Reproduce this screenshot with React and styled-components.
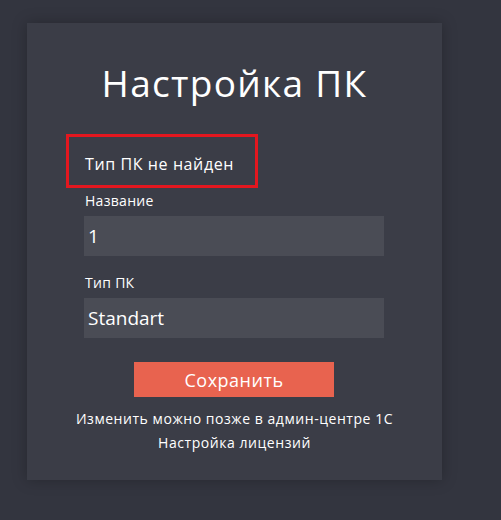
import React from "react";
import styled, { createGlobalStyle } from "styled-components";

const Global = createGlobalStyle`
  html, body { margin: 0; padding: 0; background: #33353f; }
  body { font-family: "Open Sans", "Noto Sans", sans-serif; color: #ffffff; }
  * { box-sizing: border-box; }
`;

const Page = styled.div`
  width: 501px;
  height: 520px;
  padding: 23px 0 0 27px;
  background: #33353f;
`;

const Card = styled.div`
  width: 415px;
  height: 457px;
  background: #3b3d47;
  box-shadow: 0 0 14px rgba(0, 0, 0, 0.25);
  display: flex;
  flex-direction: column;
  align-items: center;
  padding-top: 35px;
`;

const Title = styled.h1`
  margin: 0;
  font-size: 37px;
  font-weight: 400;
  line-height: 50px;
  letter-spacing: 1.3px;
  color: #ffffff;
`;

const Form = styled.div`
  width: 300px;
  display: flex;
  flex-direction: column;
  margin-top: 26px;
  margin-right: 1px;
`;

const ErrorBox = styled.div`
  width: 192px;
  height: 54px;
  margin-left: -18px;
  border: 3px solid #e3171f;
  padding: 5px 0 0 16px;
  display: flex;
  align-items: center;
  font-size: 16px;
  letter-spacing: 0.6px;
  color: #ffffff;
`;

const Field = styled.div`
  display: flex;
  flex-direction: column;
  margin-top: ${(p) => p.$top}px;
`;

const Label = styled.label`
  font-size: 14px;
  line-height: 20px;
  padding-left: 1px;
  letter-spacing: 0.3px;
  color: #ffffff;
  margin-bottom: 5px;
`;

const Input = styled.input`
  width: 300px;
  height: 40px;
  border: none;
  outline: none;
  background: #4a4c55;
  color: #ffffff;
  font-family: inherit;
  font-size: 19px;
  padding: 0 4px;
`;

const Button = styled.button`
  align-self: center;
  width: 200px;
  height: 35px;
  margin-top: 24px;
  border: none;
  background: #e8634f;
  color: #ffffff;
  font-family: inherit;
  font-size: 18px;
  letter-spacing: 0.5px;
  cursor: pointer;
`;

const Note = styled.div`
  text-align: center;
  font-size: 14px;
  line-height: 24px;
  letter-spacing: 0.55px;
  color: #ffffff;
  margin-top: ${(p) => p.$top || 0}px;
`;

export default function App() {
  return (
    <>
      <Global />
      <Page>
        <Card>
          <Title>Настройка ПК</Title>
          <Form>
            <ErrorBox>Тип ПК не найден</ErrorBox>
            <Field $top={3}>
              <Label>Название</Label>
              <Input defaultValue="1" />
            </Field>
            <Field $top={17}>
              <Label>Тип ПК</Label>
              <Input defaultValue="Standart" />
            </Field>
            <Button>Сохранить</Button>
          </Form>
          <Note $top={10}>Изменить можно позже в админ-центре 1С</Note>
          <Note>Настройка лицензий</Note>
        </Card>
      </Page>
    </>
  );
}
